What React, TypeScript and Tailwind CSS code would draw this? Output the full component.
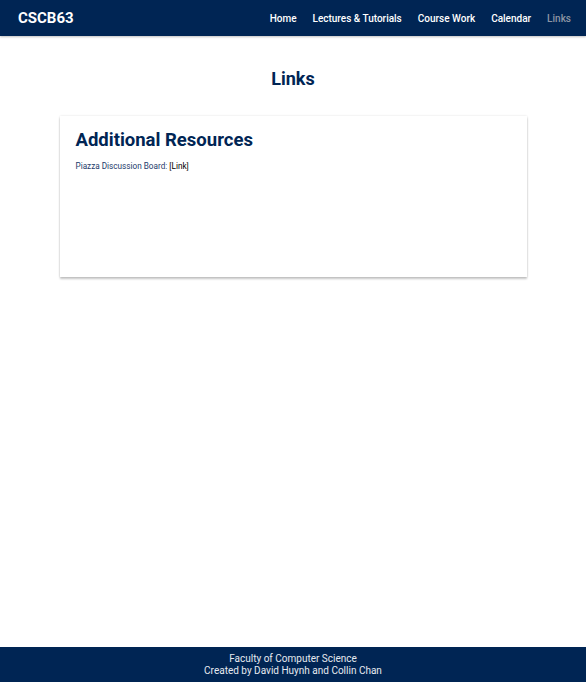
import React from 'react';

const navLinks = [
  { label: 'Home', active: false },
  { label: 'Lectures & Tutorials', active: false },
  { label: 'Course Work', active: false },
  { label: 'Calendar', active: false },
  { label: 'Links', active: true },
];

export default function App() {
  return (
    <div className="min-h-screen flex flex-col bg-white font-['Roboto',sans-serif]">
      {/* Top navigation */}
      <nav className="h-[36px] bg-[#002554] flex items-center justify-between pl-[18px] pr-[15px] shadow-[0_1px_2px_rgba(0,0,0,0.25)]">
        <span className="text-white text-[15px] font-bold">CSCB63</span>
        <ul className="flex items-center gap-[16px]">
          {navLinks.map((link) => (
            <li
              key={link.label}
              className={
                link.active
                  ? 'text-[10px] font-medium text-[#8c95a4]'
                  : 'text-[10px] font-medium text-white'
              }
            >
              {link.label}
            </li>
          ))}
        </ul>
      </nav>

      <main className="flex-1">
        <h1 className="text-center text-[18px] font-bold text-[#002554] mt-[31px] leading-[24px]">Links</h1>

        <div className="w-[467px] mx-auto mt-[25px] h-[161px] bg-white shadow-[0_0_2px_rgba(0,0,0,0.12),0_2px_2px_rgba(0,0,0,0.22)] px-[16px] pt-[12px]">
          <h2 className="text-[18.5px] font-bold text-[#002554] leading-[24px]">Additional Resources</h2>
          <p className="mt-[8px] text-[8.2px] leading-[12px]">
            <span className="text-[#1d3b6b]">Piazza Discussion Board: </span>
            <span className="text-black font-normal">[Link]</span>
          </p>
        </div>
      </main>

      {/* Footer */}
      <footer className="h-[35px] bg-[#002554] flex flex-col items-center justify-center text-[#e6eaf0] text-[10px] leading-[12px]">
        <span>Faculty of Computer Science</span>
        <span>Created by David Huynh and Collin Chan</span>
      </footer>
    </div>
  );
}
